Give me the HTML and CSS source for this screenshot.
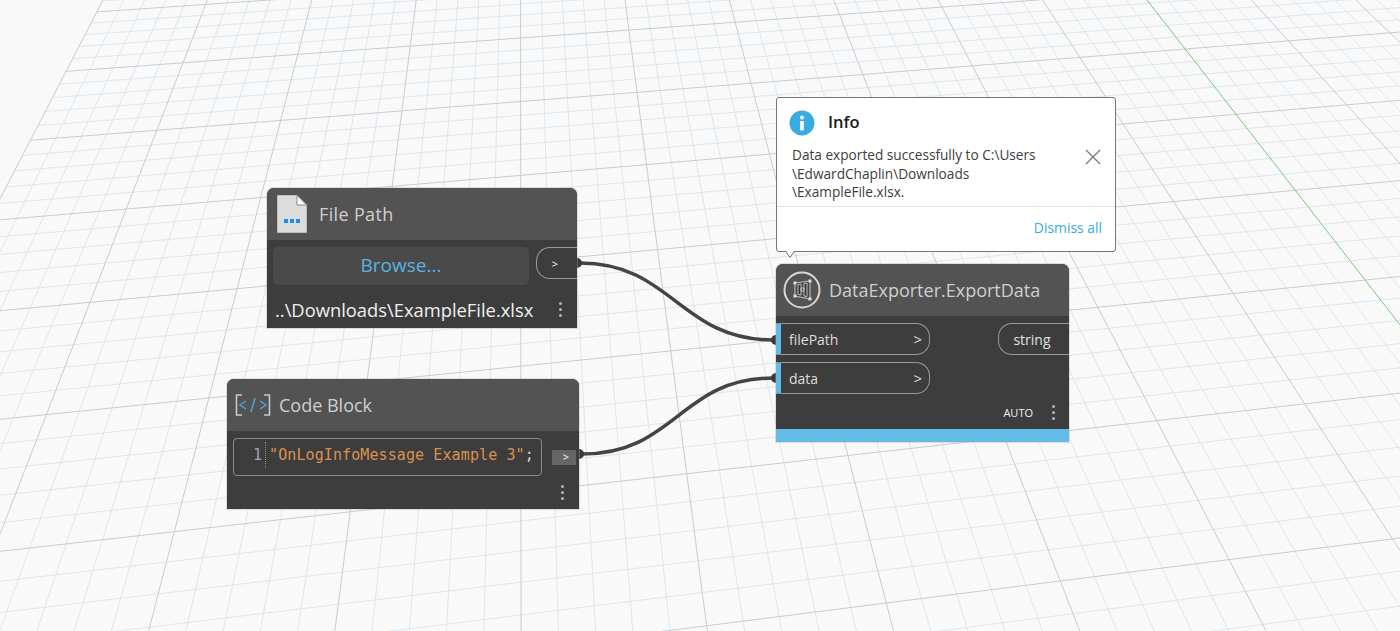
FILE: index.html
```html
<!DOCTYPE html>
<html lang="en">
    <head>
        <meta charset="UTF-8">
        <title>Graph Canvas</title>
        <link rel="stylesheet" href="styles.css">
    </head>
    <body>
        <div class="canvas">
            <svg id="grid" class="layer" width="1400" height="631"></svg>

            <svg class="layer" width="1400" height="631">
                <path class="wire" d="M580 263 C672 263 680 340 773 340"/>
                <path class="wire" d="M582 454 C676 454 680 378 773 378"/>
                <path class="pin" d="M577 258 A5 5 0 0 1 577 268 Z"/>
                <path class="pin" d="M579 449 A5 5 0 0 1 579 459 Z"/>
                <path class="pin" d="M776 335 A5 5 0 0 0 776 345 Z"/>
                <path class="pin" d="M776 373 A5 5 0 0 0 776 383 Z"/>
            </svg>

            <!-- File Path node -->
            <div class="node node-file">
                <div class="node-head">
                    <svg class="head-icon" width="30" height="38" viewBox="0 0 30 38">
                        <path d="M0.5 0.5H20L29.5 10V37.5H0.5Z" fill="#dcdcdc" stroke="#bdbdbd"/>
                        <path d="M20 0.5L29.5 10H20Z" fill="#fff" stroke="#8a8a8a"/>
                        <rect x="7" y="24" width="4" height="4" fill="#1e90ee"/>
                        <rect x="13" y="24" width="4" height="4" fill="#1e90ee"/>
                        <rect x="19" y="24" width="4" height="4" fill="#1e90ee"/>
                    </svg>
                    <span class="node-title title-spaced">File Path</span>
                </div>
                <div class="file-row">
                    <button class="browse">Browse...</button>
                    <div class="port-out port-small">&gt;</div>
                </div>
                <div class="file-foot">
                    <span class="file-name">..\Downloads\ExampleFile.xlsx</span>
                    <span class="dots"><i></i><i></i><i></i></span>
                </div>
            </div>

            <!-- Code Block node -->
            <div class="node node-code">
                <div class="node-head">
                    <svg class="head-icon" width="36" height="24" viewBox="0 0 36 24">
                        <path d="M7 2H1.5V22H7M29 2H34.5V22H29" fill="none" stroke="#c9c9c9" stroke-width="1.6"/>
                        <path d="M11 8L5 12L11 16M25 8L31 12L25 16M20 5L16 19" fill="none" stroke="#4aa3dc" stroke-width="1.5"/>
                    </svg>
                    <span class="node-title">Code Block</span>
                </div>
                <div class="code-row">
                    <div class="code-box">
                        <span class="line-no">1</span>
                        <span class="code-text">"OnLogInfoMessage Example 3"<b>;</b></span>
                    </div>
                    <div class="code-out">&gt;</div>
                </div>
                <div class="code-foot">
                    <span class="dots"><i></i><i></i><i></i></span>
                </div>
            </div>

            <!-- DataExporter node -->
            <div class="node node-export">
                <div class="node-head">
                    <svg class="head-icon" width="38" height="38" viewBox="0 0 38 38">
                        <circle cx="19" cy="19" r="17.5" fill="none" stroke="#d8d8d8" stroke-width="2"/>
                        <path d="M12 12L27 10V28L12 25Z" fill="#444" stroke="#b8b8b8" stroke-width="1.2"/>
                        <path d="M15 13.5L18 13V24L15 23.5ZM21 12.5L24 12V25.5L21 25ZM18 17H21V20H18Z" fill="#333" stroke="#cfcfcf" stroke-width="0.9"/>
                        <rect x="10.5" y="10.5" width="3" height="3" fill="#dedede"/>
                        <rect x="25.5" y="8.5" width="3" height="3" fill="#dedede"/>
                        <rect x="10.5" y="23.5" width="3" height="3" fill="#dedede"/>
                        <rect x="25.5" y="26.5" width="3" height="3" fill="#dedede"/>
                    </svg>
                    <span class="node-title">DataExporter.ExportData</span>
                </div>
                <div class="export-body">
                    <div class="export-ports">
                        <div class="port-in"><span>filePath</span><span class="port-arrow">&gt;</span></div>
                        <div class="port-in"><span>data</span><span class="port-arrow">&gt;</span></div>
                    </div>
                    <div class="port-out port-string">string</div>
                </div>
                <div class="export-foot">
                    <span class="auto">AUTO</span>
                    <span class="dots"><i></i><i></i><i></i></span>
                </div>
                <div class="export-band"></div>
            </div>

            <!-- Info popup -->
            <div class="info">
                <div class="info-head">
                    <svg width="26" height="26" viewBox="0 0 26 26">
                        <circle cx="13" cy="13" r="12.5" fill="#38abdf"/>
                        <circle cx="13" cy="7.5" r="2" fill="#fff"/>
                        <rect x="11.2" y="11" width="3.6" height="9.5" fill="#fff"/>
                    </svg>
                    <span class="info-title">Info</span>
                </div>
                <div class="info-body">
                    <p class="info-text">Data exported successfully to C:\Users<br>\EdwardChaplin\Downloads<br>\ExampleFile.xlsx.</p>
                    <svg class="info-close" width="16" height="16" viewBox="0 0 16 16">
                        <path d="M1 1L15 15M15 1L1 15" stroke="#7a7a7a" stroke-width="1.4"/>
                    </svg>
                </div>
                <div class="info-foot">Dismiss all</div>
                <svg class="info-tail" width="10" height="8" viewBox="0 0 10 8">
                    <path d="M0.5 0L5 6.5L9.5 0" fill="#fff" stroke="#6e6e6e"/>
                </svg>
            </div>
        </div>

        <script src="grid.js"></script>
    </body>
</html>
```

FILE: styles.css
```css
* {
    box-sizing: border-box;
}
body {
    margin: 0;
    background: #f9f9f9;
    font-family: "Open Sans", "Noto Sans", sans-serif;
}
.canvas {
    position: relative;
    width: 1400px;
    height: 631px;
    overflow: hidden;
    background: #f9f9f9;
}
.layer {
    position: absolute;
    left: 0;
    top: 0;
}
.wire {
    fill: none;
    stroke: #444;
    stroke-width: 3.5;
}
.pin {
    fill: #3a3a3a;
}

/* nodes */
.node {
    position: absolute;
    display: flex;
    flex-direction: column;
    background: #3d3d3d;
    border-radius: 7px 7px 0 0;
    box-shadow: 0 0 0 1px rgba(170,170,170,0.35);
}
.node-file {
    left: 267px;
    top: 188px;
    width: 310px;
    height: 140px;
}
.node-code {
    left: 227px;
    top: 379px;
    width: 352px;
    height: 130px;
}
.node-export {
    left: 776px;
    top: 264px;
    width: 293px;
    height: 178px;
}
.node-head {
    display: flex;
    align-items: center;
    flex: none;
    height: 52px;
    background: #535353;
    border-radius: 7px 7px 0 0;
}
.node-title {
    font-size: 18px;
    color: #cfcfcf;
    white-space: nowrap;
}
.title-spaced {
    letter-spacing: 0.35px;
}
.dots {
    display: flex;
    flex-direction: column;
    gap: 3px;
}
.dots i {
    display: block;
    width: 3px;
    height: 3px;
    border-radius: 50%;
    background: #b5b5b5;
}

/* file path */
.node-file .head-icon {
    margin: 0 12px 0 10px;
}
.file-row {
    display: flex;
    gap: 7px;
    padding: 7px 0 0 6px;
}
.browse {
    width: 256px;
    height: 38px;
    padding: 0 0 2px;
    font: inherit;
    font-size: 19px;
    color: #59b3e0;
    background: #4a4a4a;
    border: none;
    border-radius: 5px;
}
.port-out {
    display: flex;
    align-items: center;
    justify-content: center;
    color: #e0e0e0;
    border: 1px solid #999;
    border-right: none;
    border-radius: 14px 0 0 14px;
}
.port-small {
    width: 41px;
    height: 32px;
    font-size: 11px;
    font-weight: 600;
    padding-right: 4px;
}
.file-foot {
    display: flex;
    align-items: center;
    justify-content: space-between;
    height: 28px;
    margin-top: 10px;
    padding: 0 15px 0 8px;
}
.file-name {
    font-size: 18.35px;
    color: #f0f0f0;
    white-space: nowrap;
}

/* code block */
.node-code .head-icon {
    margin: 0 8px 0 8px;
}
.code-row {
    display: flex;
    align-items: center;
    gap: 10px;
    padding: 7px 0 0 6px;
}
.code-box {
    display: flex;
    align-items: center;
    width: 309px;
    height: 38px;
    padding-bottom: 4px;
    border: 1px solid #8a8a8a;
    border-radius: 4px;
}
.line-no {
    width: 32px;
    padding-right: 3px;
    text-align: right;
    font-family: "DejaVu Sans Mono", "Liberation Mono", monospace;
    font-size: 15px;
    color: #9aa5b5;
    border-right: 1px dotted #8a8a8a;
    line-height: 26px;
}
.code-text {
    padding-left: 3px;
    font-family: "DejaVu Sans Mono", "Liberation Mono", monospace;
    font-size: 15px;
    letter-spacing: 0.1px;
    color: #d8924f;
    white-space: nowrap;
}
.code-text b {
    font-weight: normal;
    color: #d8d8d8;
}
.code-out {
    width: 24px;
    height: 15px;
    padding-left: 4px;
    font-size: 11px;
    font-weight: 600;
    line-height: 14px;
    text-align: center;
    color: #e8e8e8;
    background: #666;
}
.code-foot {
    display: flex;
    justify-content: flex-end;
    padding: 9px 15px 0 0;
}

/* data exporter */
.node-export .head-icon {
    margin: 0 8px 0 7px;
}
.export-body {
    display: flex;
    justify-content: space-between;
    padding-top: 7px;
}
.export-ports {
    display: flex;
    flex-direction: column;
    gap: 7px;
}
.port-in {
    display: flex;
    align-items: center;
    justify-content: space-between;
    width: 154px;
    height: 32px;
    padding: 0 7px 0 8px;
    font-size: 14px;
    color: #dcdcdc;
    border: 1px solid #999;
    border-left: 5px solid #63bce6;
    border-radius: 0 14px 14px 0;
}
.port-arrow {
    font-size: 15px;
}
.port-string {
    width: 71px;
    height: 32px;
    padding-right: 4px;
    font-size: 14px;
}
.export-foot {
    display: flex;
    align-items: center;
    justify-content: flex-end;
    gap: 19px;
    flex: 1;
    padding: 2px 14px 0 0;
}
.auto {
    font-size: 11px;
    color: #efefef;
}
.export-band {
    flex: none;
    height: 13px;
    background: #63bce6;
}

/* info popup */
.info {
    position: absolute;
    left: 776px;
    top: 97px;
    width: 340px;
    height: 155px;
    display: flex;
    flex-direction: column;
    color: #3c3c3c;
    background: #fff;
    border: 1px solid #777;
    border-radius: 3px;
}
.info-head {
    display: flex;
    align-items: center;
    gap: 13px;
    height: 46px;
    padding: 4px 0 0 12px;
}
.info-title {
    margin-top: -3px;
    font-size: 16.5px;
    font-weight: 600;
    color: #1a1a1a;
}
.info-body {
    display: flex;
    justify-content: space-between;
    flex: none;
    height: 63px;
    padding: 2px 14px 0 15px;
    border-bottom: 1px solid #e2e2e2;
}
.info-text {
    margin: 0;
    font-size: 13.65px;
    line-height: 18.5px;
    white-space: nowrap;
}
.info-close {
    margin-top: 3px;
}
.info-foot {
    padding: 11px 13px 0 0;
    text-align: right;
    font-size: 13.9px;
    color: #38abdf;
}
.info-tail {
    position: absolute;
    left: 8px;
    bottom: -8px;
}
```

FILE: grid.js
```js
// Ground grid drawn in perspective. Both line families run to a vanishing point on the same horizon,
// so they are evenly spaced where they cross y = 0.
(function(){
    const svg = document.getElementById("grid");
    const ns = "http://www.w3.org/2000/svg";
    const horizon = -805;
    const vpA = 520;      // the "vertical" family
    const vpB = 12000;    // the "horizontal" family
    const startA = 1147;  // green axis where it crosses y = 0
    const stepA = 104.4 / 5;
    const startB = 270;
    const stepB = 768 / 5;
    const W = 1400;
    const H = 631;

    function addLine(x1, y1, x2, y2, cls){
        const l = document.createElementNS(ns, "line");
        l.setAttribute("x1", x1);
        l.setAttribute("y1", y1);
        l.setAttribute("x2", x2);
        l.setAttribute("y2", y2);
        l.setAttribute("stroke", cls.stroke);
        l.setAttribute("stroke-width", cls.width);
        svg.appendChild(l);
    }

    const minor = { stroke: "#dce7ef", width: 1 };
    const major = { stroke: "#c6cdd2", width: 1 };
    const axis = { stroke: "#7cc67c", width: 1 };

    // x on a line of the first family at height y
    function xOnA(x0, y){
        return x0 + (x0 - vpA) / (0 - horizon) * y;
    }

    // Second family: the left edge of the grid is the first family line i = -50
    const edge = startA - 50 * stepA;

    function drawB(major_only){
        for(let j = -5; j <= 60; j++){
            const isMajor = j % 5 === 0;
            if(isMajor !== major_only) continue;
            const x0 = startB + j * stepB;
            const slope = (0 - horizon) / (vpB - x0);
            // intersect with the left edge
            const m = (edge - vpA) / (0 - horizon);
            const y1 = (x0 - edge) * slope / (1 + m * slope);
            const x1 = edge + m * y1;
            addLine(x1, y1, W + 5, (x0 - W - 5) * slope, isMajor ? major : minor);
        }
    }

    function drawA(major_only){
        for(let i = -50; i <= 20; i++){
            const isMajor = i % 5 === 0;
            if(isMajor !== major_only) continue;
            const x0 = startA + i * stepA;
            const style = i === 0 ? axis : (isMajor ? major : minor);
            addLine(x0, 0, xOnA(x0, H), H, style);
        }
    }

    drawB(false);
    drawA(false);
    drawB(true);
    drawA(true);
})();
```
